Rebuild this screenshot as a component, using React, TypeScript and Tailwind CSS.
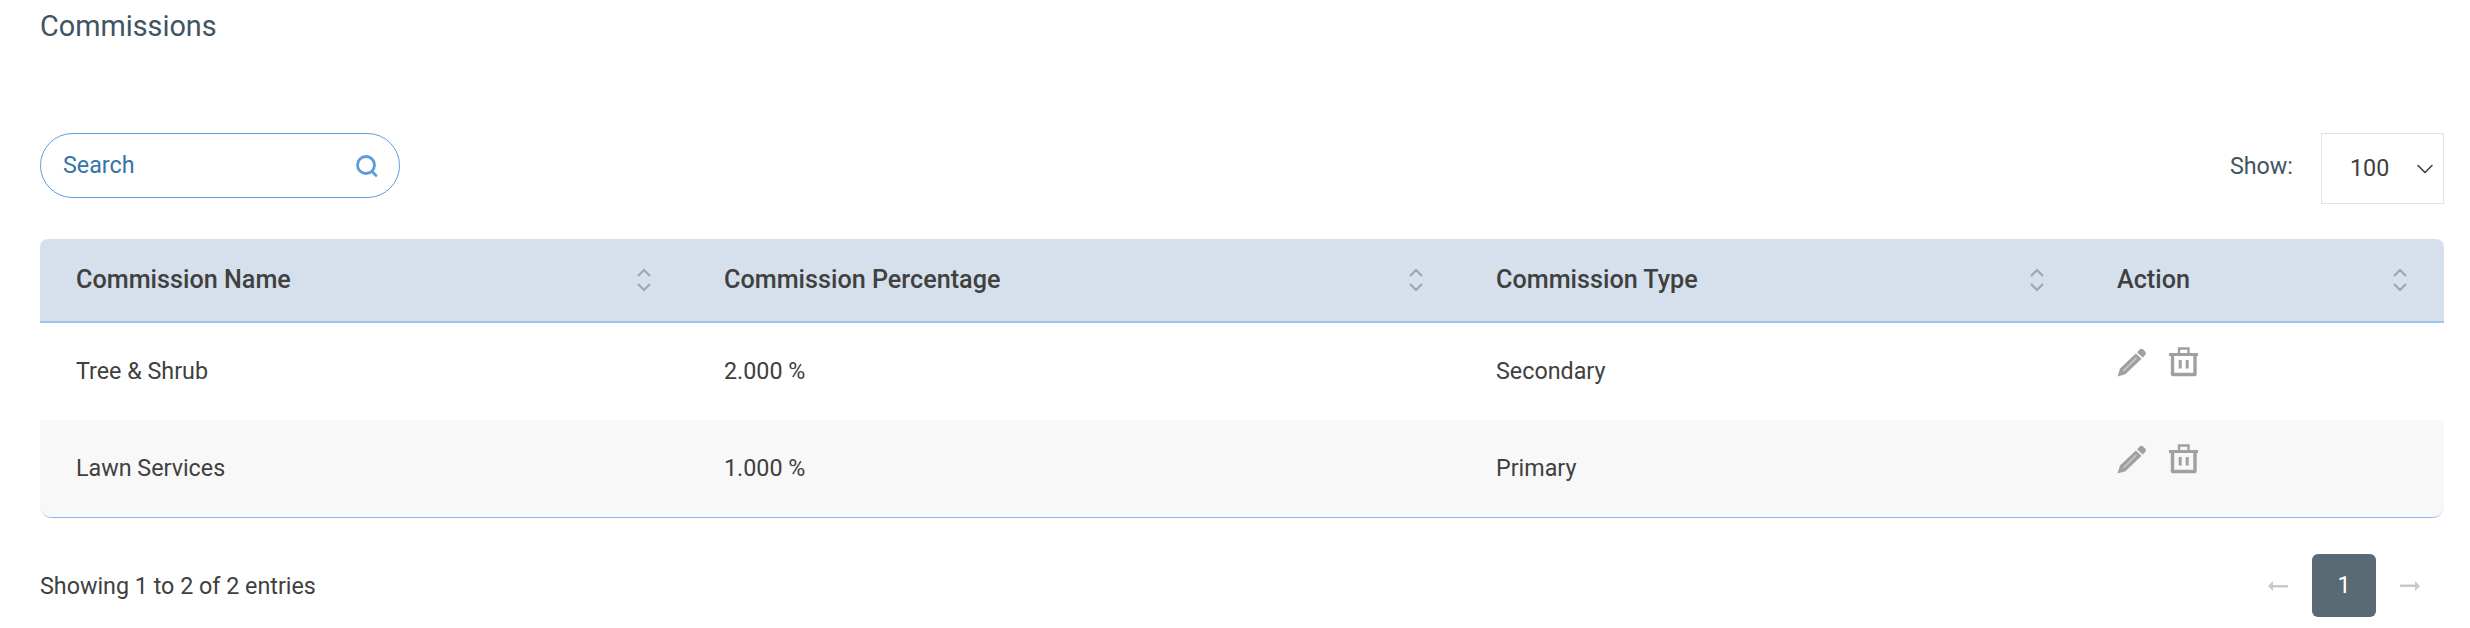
import { ChevronDown } from "lucide-react";

const rows = [
  { name: "Tree & Shrub", percent: "2.000 %", type: "Secondary" },
  { name: "Lawn Services", percent: "1.000 %", type: "Primary" },
];

const columns = [
  { label: "Commission Name", width: "w-[648px]" },
  { label: "Commission Percentage", width: "w-[772px]" },
  { label: "Commission Type", width: "w-[621px]" },
  { label: "Action", width: "w-[363px]" },
];

const SortIcon = () => (
  <svg width="16" height="26" viewBox="0 0 16 26" fill="none" stroke="#a3a5a8" strokeWidth="2.200" className="shrink-0">
    <path d="M2 9 L8 3 L14 9" />
    <path d="M2 17 L8 23 L14 17" />
  </svg>
);

const PencilIcon = () => (
  <svg width="30" height="30" viewBox="0 0 30 30" fill="#a0a0a0">
    <path d="M22 3.200a3 3 0 0 1 4.200-.6l1.500 1.300a3.200 3.200 0 0 1 .3 4.400L25.800 10.500 20 5.400z" />
    <path d="M18.800 6.600 24.600 11.800 8.400 27.200 0.500 29.500 3 21.600z" />
    <path d="M6.500 23.800 19.500 10.800" stroke="#ffffff" strokeOpacity="0.45" strokeWidth="1.600" />
  </svg>
);

const TrashIcon = () => (
  <svg width="30" height="30" viewBox="0 0 30 30" fill="none" stroke="#a0a0a0">
    <path d="M0 7.500h29" strokeWidth="3" />
    <path d="M3.500 7.500V27.500H26V7.500" strokeWidth="3.400" strokeLinejoin="round" />
    <path d="M10 7V1.500h9.500V7" strokeWidth="2.400" />
    <path d="M11.200 13v8.500M18.200 13v8.500" strokeWidth="3" />
  </svg>
);

const ArrowIcon = ({ flip }: { flip?: boolean }) => (
  <svg width="20" height="12" viewBox="0 0 20 12" fill="#c9c9c9" className={flip ? "rotate-180" : ""}>
    <path d="M0 6 L5 1 V5 H20 V7.500 H5 V11 Z" />
  </svg>
);

export default function App() {
  return (
    <div className="w-[2470px] h-[628px] bg-white overflow-hidden font-['Roboto',sans-serif] text-[#404040] pl-10 pr-[26px]">
      <h1 className="text-[28.8px] leading-[30px] pt-[11px] text-[#415462] font-normal">Commissions</h1>

      <div className="flex items-start justify-between mt-[92px]">
        <div className="w-[360px] h-[65px] rounded-full border border-[#5f9ddf] flex items-center justify-between pl-[22px] pr-[20px]">
          <span className="text-[23.300px] text-[#3474a8]">Search</span>
          <svg width="24" height="24" viewBox="0 0 24 24" fill="none" stroke="#5b9bdc" strokeWidth="2.800" strokeLinecap="round">
            <circle cx="11" cy="11" r="8.500" />
            <path d="M17 17.500 L21 21.500" />
          </svg>
        </div>
        <div className="flex items-center">
          <span className="text-[23.300px] text-[#415462] mr-[28px] -mt-[4px]">Show:</span>
          <div className="w-[123px] h-[71px] border border-[#e2e2e2] flex items-center justify-between pl-[28px] pr-[4px]">
            <span className="text-[23.300px] text-[#404040]">100</span>
            <ChevronDown size={28} strokeWidth={1.4} className="text-[#404040]" />
          </div>
        </div>
      </div>

      <table className="mt-[35px] w-[2404px] table-fixed border-separate border-spacing-0 border-b border-[#8ab8ec] rounded-b-xl">
        <thead>
          <tr>
            {columns.map((col, i) => (
              <th
                key={col.label}
                className={`${col.width} h-[84px] bg-[#d5e0ec] border-b-2 border-[#9dc3ee] pl-9 pr-[36px] text-left text-[25.200px] font-medium text-[#404040] ${i === 0 ? "rounded-tl-lg" : ""} ${i === 3 ? "rounded-tr-lg" : ""}`}
              >
                <div className="flex items-center justify-between">
                  <span>{col.label}</span>
                  <SortIcon />
                </div>
              </th>
            ))}
          </tr>
        </thead>
        <tbody>
          {rows.map((row, i) => (
            <tr key={row.name} className={i === 1 ? "bg-[#f8f8f8]" : "bg-white"}>
              <td className={`h-[97px] pl-9 text-[23.300px] ${i === 1 ? "rounded-bl-xl" : ""}`}>{row.name}</td>
              <td className="pl-9 text-[23.300px]">{row.percent}</td>
              <td className="pl-9 text-[23.300px]">{row.type}</td>
              <td className={`pl-9 align-top pt-[24px] ${i === 1 ? "rounded-br-xl" : ""}`}>
                <div className="flex items-center gap-[22px]">
                  <PencilIcon />
                  <TrashIcon />
                </div>
              </td>
            </tr>
          ))}
        </tbody>
      </table>

      <div className="flex items-center justify-between mt-[36px] pr-[24px]">
        <span className="text-[23.300px] text-[#404040] mt-[2px]">Showing 1 to 2 of 2 entries</span>
        <div className="flex items-center">
          <ArrowIcon />
          <div className="w-[64px] h-[63px] mx-[24px] rounded-md bg-[#5a6a75] text-white text-[23.300px] flex items-center justify-center">1</div>
          <ArrowIcon flip />
        </div>
      </div>
    </div>
  );
}
